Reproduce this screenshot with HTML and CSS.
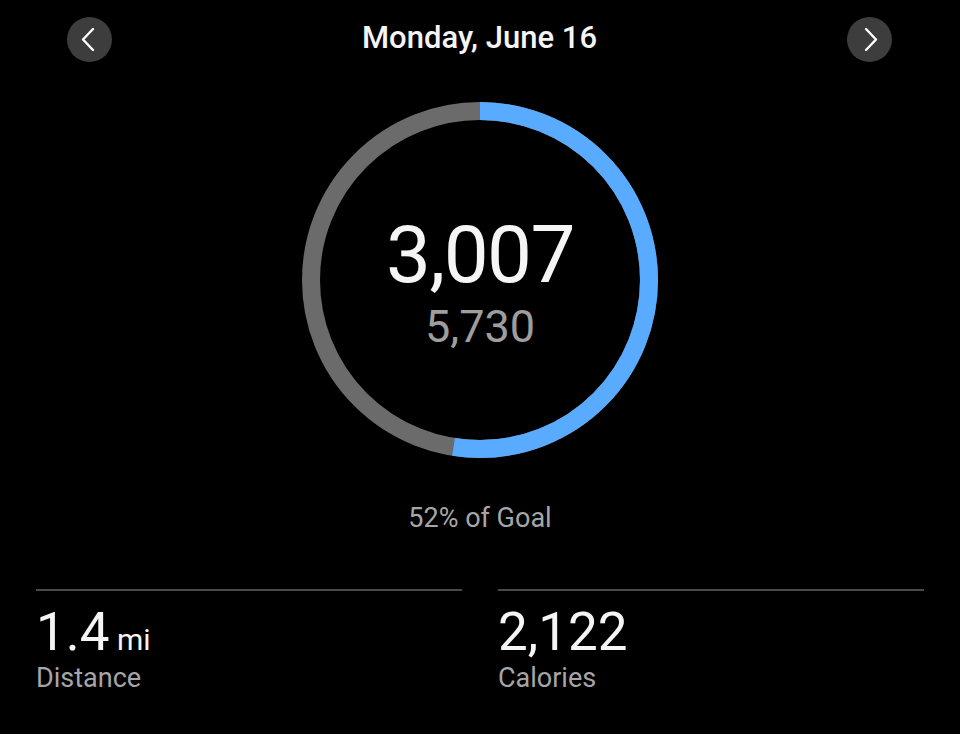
FILE: index.html
```html
<!DOCTYPE html>
<html>
<head>
    <title>Steps</title>
    <link rel="stylesheet" href="styles.css">
</head>
<body>
    <div class="header">
        <button class="nav-btn">
            <svg width="45" height="45" viewBox="0 0 45 45"><path d="M26 12 L16 22.5 L26 33" fill="none" stroke="#fff" stroke-width="2.4" stroke-linecap="round" stroke-linejoin="round"/></svg>
        </button>
        <div class="title">Monday, June 16</div>
        <button class="nav-btn">
            <svg width="45" height="45" viewBox="0 0 45 45"><path d="M19 12 L29 22.5 L19 33" fill="none" stroke="#fff" stroke-width="2.4" stroke-linecap="round" stroke-linejoin="round"/></svg>
        </button>
    </div>

    <div class="ring">
        <svg width="356" height="356" viewBox="0 0 356 356">
            <circle cx="178" cy="178" r="169" fill="none" stroke="#6b6b6b" stroke-width="18"/>
            <circle cx="178" cy="178" r="169" fill="none" stroke="#58abff" stroke-width="18"
                stroke-dasharray="557.3 1061.9" transform="rotate(-90 178 178)"/>
        </svg>
        <div class="ring-text">
            <div class="steps">3,007</div>
            <div class="goal">5,730</div>
        </div>
    </div>

    <div class="percent">52% of Goal</div>

    <div class="stats">
        <div class="stat">
            <div class="stat-value">1.4<span class="unit"> mi</span></div>
            <div class="stat-label">Distance</div>
        </div>
        <div class="stat">
            <div class="stat-value">2,122</div>
            <div class="stat-label">Calories</div>
        </div>
    </div>
</body>
</html>
```

FILE: styles.css
```css
body { margin: 0; background: #000; color: #f2f2f2; font-family: Roboto, "Noto Sans", sans-serif; }

.header { display: flex; align-items: center; padding: 17px 68px 0 67px; }
.nav-btn { width: 45px; height: 45px; border: none; border-radius: 50%; background: #3d3d3d; padding: 0; display: flex; }
.title { flex: 1; text-align: center; font-size: 31px; font-weight: 500; color: #f5f5f5; padding-bottom: 5px; }

.ring { display: grid; width: 356px; height: 356px; margin: 40px auto 0; }
.ring svg, .ring-text { grid-area: 1 / 1; }
.ring-text { display: flex; flex-direction: column; align-items: center; padding-top: 113px; }
.steps { font-size: 80px; line-height: 1; color: #f5f5f5; letter-spacing: -1.5px; }
.goal { font-size: 45px; line-height: 1; color: #9e9e9e; margin-top: 9px; }

.percent { text-align: center; font-size: 27px; line-height: 1; color: #a6a6a6; margin-top: 47px; }

.stats { display: flex; gap: 36px; padding: 0 36px; margin-top: 57px; }
.stat { flex: 1; border-top: 2px solid #4a4a4a; padding-top: 15px; }
.stat-value { font-size: 53px; line-height: 1; color: #f5f5f5; }
.unit { font-size: 30px; }
.stat-label { font-size: 27px; line-height: 1; color: #a6a6a6; margin-top: 6px; }
```
